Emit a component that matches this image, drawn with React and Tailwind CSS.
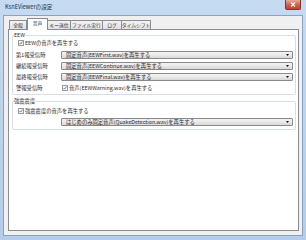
import React from "react";

function Check({ className = "" }) {
  return (
    <svg width="6" height="6" viewBox="0 0 6 6" className={className}>
      <rect x="0.5" y="0.5" width="5" height="5" fill="#f4f4f4" stroke="#9a9b9b" strokeWidth="1" />
      <path d="M1.6 3 L2.6 4.1 L4.5 1.6" fill="none" stroke="#5a6fa5" strokeWidth="0.9" />
    </svg>
  );
}

function Combo({ text }) {
  return (
    <div className="flex-1 h-[8px] flex items-center justify-between border border-[#8a8a8a] rounded-[1px] bg-gradient-to-b from-[#f3f3f3] via-[#e9e9e9] to-[#d8d8d8] pl-[4px] pr-[3px]">
      <span className="leading-[6px] whitespace-nowrap">{text}</span>
      <svg width="3" height="2" viewBox="0 0 3 2">
        <path d="M0 0 H3 L1.5 2 Z" fill="#111" />
      </svg>
    </div>
  );
}

function Row({ label, children, className = "" }) {
  return (
    <div className={"flex items-center h-[8px] " + className}>
      <div className="w-[45px] shrink-0 leading-[6px] whitespace-nowrap">{label}</div>
      {children}
    </div>
  );
}

export default function App() {
  const tabs = [
    { t: "全般", w: "w-[18px]" },
    { t: "音声", w: "w-[21px]", sel: true },
    { t: "キー送信", w: "w-[24px]" },
    { t: "ファイル実行", w: "w-[33px]" },
    { t: "ログ", w: "w-[20px]" },
    { t: "タイムシフト", w: "w-[30px]" },
  ];
  return (
    <div className="relative w-[306px] h-[240px] overflow-hidden flex flex-col bg-gradient-to-b from-[#c6dbf1] via-[#bcd3ec] to-[#b4cce8] font-['Noto_Sans_CJK_JP',sans-serif] text-[5.3px] text-[#2a2a2a]">
      <div className="h-[15px] shrink-0 flex items-center pl-[5px] text-[5.6px] text-[#1e2a3a] leading-none">
        KsnEViewerの設定
      </div>
      <div className="absolute right-[5px] top-0 w-[16px] h-[10px] rounded-b-[2px] border border-t-0 border-[#7a3a30] bg-gradient-to-b from-[#e9a898] via-[#d2654e] to-[#c0402a] flex items-center justify-center">
        <svg width="6" height="5" viewBox="0 0 6 5">
          <path d="M1 0.5 L5 4.5 M5 0.5 L1 4.5" stroke="#fff" strokeWidth="1.1" />
        </svg>
      </div>
      <div className="flex-1 mx-[3px] mb-[4px] border border-[#8aa2bf] bg-[#f0f0f0] flex flex-col pl-[4px] pr-[3px] pb-[4px]">
        <div className="h-[12px] mt-[1px] flex items-end pl-[1px] relative z-10 text-[4.8px]">
          {tabs.map((tab) =>
            tab.sel ? (
              <div
                key={tab.t}
                className={tab.w + " h-[12px] -mb-px bg-white border border-b-0 border-[#898c95] flex items-center justify-center leading-none pb-[2px] whitespace-nowrap"}
              >
                {tab.t}
              </div>
            ) : (
              <div
                key={tab.t}
                className={tab.w + " h-[9px] border border-b-0 border-[#898c95] -ml-px first:ml-0 bg-gradient-to-b from-[#f3f3f3] to-[#e0e0e0] flex items-center justify-center leading-none whitespace-nowrap"}
              >
                {tab.t}
              </div>
            )
          )}
        </div>
        <div className="flex-1 border border-[#898c95] bg-white flex flex-col pl-[3px] pr-[2px]">
          <fieldset className="mt-[2px] border border-[#d5dfe5] rounded-[2px] p-0">
            <legend className="ml-[1px] leading-[6px] text-[#2a2a2a]">EEW</legend>
            <div className="pl-[3px] pr-[2px] pb-[2px]">
              <div className="h-[10px] flex items-center pl-[2px] gap-[1px]">
                <Check />
                <span className="leading-[6px]">EEWの音声を再生する</span>
              </div>
              <Row label="第1報受信時" className="mt-[3px]">
                <Combo text="固定音声(EEWFirst.wav)を再生する" />
              </Row>
              <Row label="継続報受信時" className="mt-[3px]">
                <Combo text="固定音声(EEWContinue.wav)を再生する" />
              </Row>
              <Row label="最終報受信時" className="mt-[3px]">
                <Combo text="固定音声(EEWFinal.wav)を再生する" />
              </Row>
              <Row label="警報受信時" className="mt-[3px]">
                <div className="flex items-center gap-[1px] pl-[1px]">
                  <Check />
                  <span className="leading-[6px] whitespace-nowrap">音声(EEWWarning.wav)を再生する</span>
                </div>
              </Row>
            </div>
          </fieldset>
          <fieldset className="mt-[3px] border border-[#d5dfe5] rounded-[2px] p-0">
            <legend className="ml-[1px] leading-[6px] text-[#2a2a2a]">強震震度</legend>
            <div className="pl-[3px] pr-[2px] pb-[3px]">
              <div className="h-[8px] mt-[3px] flex items-center pl-[2px] gap-[1px]">
                <Check />
                <span className="leading-[6px]">強震震度の音声を再生する</span>
              </div>
              <Row label="" className="mt-[3px]">
                <Combo text="はじめのみ固定音声(QuakeDetection.wav)を再生する" />
              </Row>
            </div>
          </fieldset>
        </div>
      </div>
    </div>
  );
}
